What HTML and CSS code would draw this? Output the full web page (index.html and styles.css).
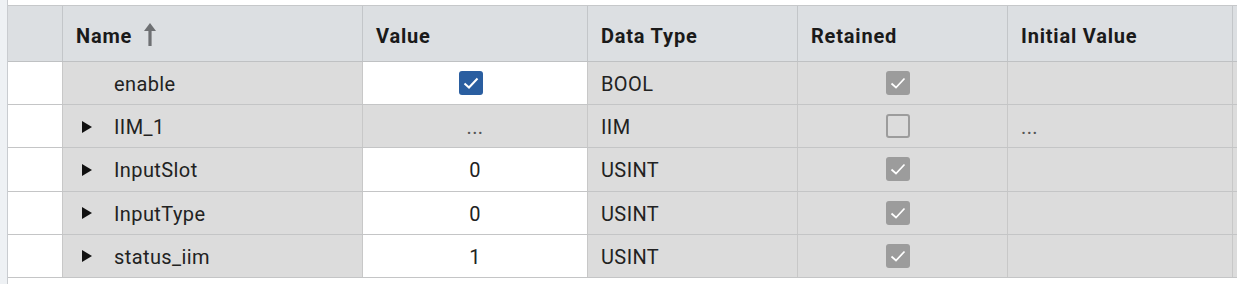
FILE: index.html
```html
<!DOCTYPE html>
<html>
<head>
<meta charset="utf-8">
<link rel="stylesheet" href="styles.css">
</head>
<body>
<div class="page">
  <div class="strip"></div>
  <div class="grid">
    <div class="topgap"></div>
    <div class="row head">
      <div class="c c0"></div>
      <div class="c name">Name<svg class="sort" width="12" height="23" viewBox="0 0 12 23"><path d="M6 0 L12 8 L7.6 8 L7.6 23 L4.4 23 L4.4 8 L0 8 Z" fill="#6e7073"/></svg></div>
      <div class="c val">Value</div>
      <div class="c dt">Data Type</div>
      <div class="c ret">Retained</div>
      <div class="c init">Initial Value</div>
      <div class="c fill"></div>
    </div>
    <div class="row">
      <div class="c c0 w"></div>
      <div class="c name g"><span class="noarrow"></span>enable</div>
      <div class="c val w center"><span class="cb blue"><svg width="24" height="24" viewBox="0 0 24 24"><path d="M5.5 12.5 L10 16.5 L18.5 7.5" stroke="#fff" stroke-width="2" fill="none"/></svg></span></div>
      <div class="c dt g">BOOL</div>
      <div class="c ret g center"><span class="cb grey"><svg width="24" height="24" viewBox="0 0 24 24"><path d="M5.5 12.5 L10 16.5 L18.5 7.5" stroke="#fff" stroke-width="1.7" fill="none"/></svg></span></div>
      <div class="c init g"></div>
      <div class="c fill g"></div>
    </div>
    <div class="row">
      <div class="c c0 w"></div>
      <div class="c name g"><span class="arrow"></span>IIM_1</div>
      <div class="c val g center dots">...</div>
      <div class="c dt g">IIM</div>
      <div class="c ret g center"><span class="cb empty"></span></div>
      <div class="c init g dots">...</div>
      <div class="c fill g"></div>
    </div>
    <div class="row">
      <div class="c c0 w"></div>
      <div class="c name g"><span class="arrow"></span>InputSlot</div>
      <div class="c val w center">0</div>
      <div class="c dt g">USINT</div>
      <div class="c ret g center"><span class="cb grey"><svg width="24" height="24" viewBox="0 0 24 24"><path d="M5.5 12.5 L10 16.5 L18.5 7.5" stroke="#fff" stroke-width="1.7" fill="none"/></svg></span></div>
      <div class="c init g"></div>
      <div class="c fill g"></div>
    </div>
    <div class="row">
      <div class="c c0 w"></div>
      <div class="c name g"><span class="arrow"></span>InputType</div>
      <div class="c val w center">0</div>
      <div class="c dt g">USINT</div>
      <div class="c ret g center"><span class="cb grey"><svg width="24" height="24" viewBox="0 0 24 24"><path d="M5.5 12.5 L10 16.5 L18.5 7.5" stroke="#fff" stroke-width="1.7" fill="none"/></svg></span></div>
      <div class="c init g"></div>
      <div class="c fill g"></div>
    </div>
    <div class="row">
      <div class="c c0 w"></div>
      <div class="c name g"><span class="arrow"></span>status_iim</div>
      <div class="c val w center">1</div>
      <div class="c dt g">USINT</div>
      <div class="c ret g center"><span class="cb grey"><svg width="24" height="24" viewBox="0 0 24 24"><path d="M5.5 12.5 L10 16.5 L18.5 7.5" stroke="#fff" stroke-width="1.7" fill="none"/></svg></span></div>
      <div class="c init g"></div>
      <div class="c fill g"></div>
    </div>
  </div>
</div>
</body>
</html>
```
FILE: styles.css
```css
html, body {
  margin: 0;
  padding: 0;
  background: #ffffff;
}
.page {
  display: flex;
  height: 284px;
  overflow: hidden;
  font-family: Roboto, "Liberation Sans", sans-serif;
  color: #222222;
  font-size: 20px;
  letter-spacing: 0.4px;
}
.strip {
  width: 7px;
  background: #eef1f4;
  border-right: 1px solid #c9ccd0;
  flex: none;
}
.grid {
  flex: 1;
  display: flex;
  flex-direction: column;
}
.topgap {
  height: 5px;
  background: #ffffff;
}
.row {
  display: flex;
  height: 43.2px;
  box-sizing: border-box;
  border-bottom: 1px solid #c4c5c6;
}
.row.head {
  height: 57px;
  border-top: 1px solid #c6c8ca;
  border-bottom-color: #bfc1c3;
  background: #dcdfe2;
  font-weight: bold;
  color: #1a1a1a;
  letter-spacing: 0.8px;
}
.c {
  box-sizing: border-box;
  border-right: 1px solid #c3c6c9;
  display: flex;
  align-items: center;
  padding-left: 13px;
  padding-top: 2px;
  flex: none;
}
.head .c { padding-top: 4px; }
.c0 { width: 55px; }
.name { width: 300px; }
.val { width: 225px; }
.dt { width: 210px; }
.ret { width: 210px; }
.init { width: 225px; }
.fill { flex: 1; border-right: none; }
.w { background: #ffffff; }
.g { background: #dcdcdc; }
.center { justify-content: center; padding-left: 0; }
.ret.center { padding-right: 10px; }
.row:not(.head) .c { border-right-color: #c8c8c8; }
.sort { margin-left: 12px; margin-top: -2px; flex: none; }
.arrow {
  width: 0;
  height: 0;
  border-top: 6px solid transparent;
  border-bottom: 6px solid transparent;
  border-left: 10px solid #111111;
  margin-left: 6px;
  margin-right: 22px;
  margin-top: -1px;
}
.noarrow {
  width: 10px;
  margin-left: 6px;
  margin-right: 22px;
}
.cb {
  width: 24px;
  height: 24px;
  box-sizing: border-box;
  border-radius: 3px;
  display: flex;
  align-items: center;
  justify-content: center;
  margin-top: -2px;
  flex: none;
}
.cb.blue { background: #2a5ea0; margin-right: 9px; }
.cb.grey { background: #9c9c9c; }
.cb.empty { border: 2px solid #9c9c9c; }
.dots { color: #555555; }
```
